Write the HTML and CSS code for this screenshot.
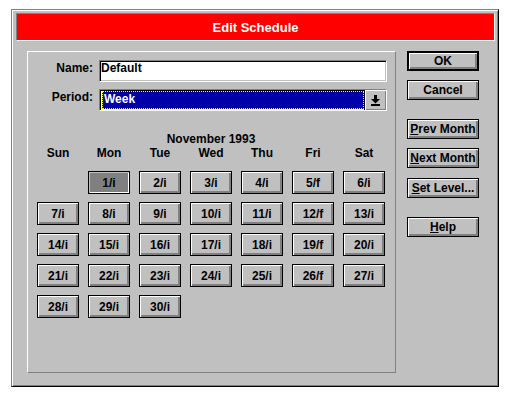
FILE: index.html
```html
<!DOCTYPE html>
<html lang="en">
	<head>
		<meta charset="UTF-8">
		<title>Edit Schedule</title>
		<link rel="stylesheet" href="styles.css">
	</head>
	<body>
		<div class="window">
			<div class="titlebar">Edit Schedule</div>
			<div class="dialog-body">
				<div class="panel">
					<div class="form">
						<label>Name:</label>
						<div class="edit">Default</div>
						<label>Period:</label>
						<div class="combo">
							<div class="combo-value">Week</div>
							<div class="combo-btn">
								<svg width="9" height="11" viewBox="0 0 9 11">
									<rect x="3" y="0" width="3" height="4"/>
									<path d="M0 4h9l-4.5 4.5z"/>
									<rect x="0" y="9" width="9" height="2"/>
								</svg>
							</div>
						</div>
					</div>
					<div class="cal">
						<div class="month">November 1993</div>
						<div class="cal-head">
							<div>Sun</div><div>Mon</div><div>Tue</div><div>Wed</div><div>Thu</div><div>Fri</div><div>Sat</div>
						</div>
						<div class="cal-days">
							<div></div>
							<button class="day pressed">1/i</button>
							<button class="day">2/i</button>
							<button class="day">3/i</button>
							<button class="day">4/i</button>
							<button class="day">5/f</button>
							<button class="day">6/i</button>
							<button class="day">7/i</button>
							<button class="day">8/i</button>
							<button class="day">9/i</button>
							<button class="day">10/i</button>
							<button class="day">11/i</button>
							<button class="day">12/f</button>
							<button class="day">13/i</button>
							<button class="day">14/i</button>
							<button class="day">15/i</button>
							<button class="day">16/i</button>
							<button class="day">17/i</button>
							<button class="day">18/i</button>
							<button class="day">19/f</button>
							<button class="day">20/i</button>
							<button class="day">21/i</button>
							<button class="day">22/i</button>
							<button class="day">23/i</button>
							<button class="day">24/i</button>
							<button class="day">25/i</button>
							<button class="day">26/f</button>
							<button class="day">27/i</button>
							<button class="day">28/i</button>
							<button class="day">29/i</button>
							<button class="day">30/i</button>
						</div>
					</div>
				</div>
				<div class="buttons">
					<button class="btn default">OK</button>
					<button class="btn cancel">Cancel</button>
					<button class="btn prev"><u>P</u>rev Month</button>
					<button class="btn next"><u>N</u>ext Month</button>
					<button class="btn level"><u>S</u>et Level...</button>
					<button class="btn help"><u>H</u>elp</button>
				</div>
			</div>
		</div>
	</body>
</html>
```

FILE: styles.css
```css
* {
	margin: 0;
	padding: 0;
	box-sizing: border-box;
}

body {
	background-color: #fff;
	padding: 9px 0 0 11px;
	font: bold 12px "Liberation Sans", Arial, sans-serif;
	color: #000;
}

.window {
	width: 488px;
	height: 378px;
	background-color: #c0c0c0;
	border: 1px solid;
	border-color: #808080 #000 #000 #808080;
	box-shadow: inset 1px 1px #fff, inset -1px -1px #808080;
	padding: 3px 3px 0 4px;
}

.titlebar {
	height: 28px;
	background-color: #f00;
	color: #fff;
	border: 1px solid;
	border-color: #808080 #fff #fff #808080;
	display: flex;
	align-items: center;
	justify-content: center;
	font-size: 13px;
}

.dialog-body {
	display: flex;
	margin: 10px 0 0 11px;
}

.panel {
	width: 369px;
	height: 322px;
	border: 1px solid;
	border-color: #fff #808080 #808080 #fff;
	padding-top: 8px;
}

.form {
	display: grid;
	grid-template-columns: 65px 288px;
	column-gap: 6px;
	row-gap: 7px;
}

.form label {
	text-align: right;
	line-height: 14px;
	padding-top: 1px;
}

.edit {
	height: 22px;
	background-color: #fff;
	border: 1px solid;
	border-color: #808080 #fff #fff #808080;
	box-shadow: inset 1px 1px #000, inset -1px -1px #c0c0c0;
	padding-left: 1px;
	line-height: 14px;
}

.combo {
	height: 22px;
	display: flex;
	background-color: #fff;
	border: 1px solid;
	border-color: #808080 #fff #fff #808080;
	box-shadow: inset 1px 1px #000;
	padding: 1px 0 1px 2px;
}

.combo-value {
	flex: 1;
	background-color: #0000a8;
	color: #fff;
	border: 1px dotted #ff0;
	line-height: 14px;
	padding-left: 1px;
}

.combo-btn {
	width: 22px;
	margin-top: -1px;
	margin-bottom: -1px;
	background-color: #c0c0c0;
	border-left: 1px solid #000;
	box-shadow: inset 1px 1px #fff, inset -1px -1px #808080;
	display: flex;
	align-items: center;
	justify-content: center;
}

.cal {
	padding-left: 9px;
}

.month {
	width: 348px;
	margin-top: 21px;
	text-align: center;
	line-height: 14px;
}

.cal-head,
.cal-days {
	display: grid;
	grid-template-columns: repeat(7, 42px);
	column-gap: 9px;
}

.cal-head div {
	text-align: center;
	line-height: 14px;
}

.cal-days {
	margin-top: 11px;
	grid-auto-rows: 23px;
	row-gap: 8px;
}

button {
	font: inherit;
	color: inherit;
	background-color: #c0c0c0;
	border: 1px solid #000;
	box-shadow: inset 1px 1px #fff, inset -2px -2px #808080;
	line-height: 14px;
}

.day.pressed {
	background-color: #808080;
	box-shadow: inset 1px 1px #c0c0c0, inset -1px -1px #fff;
}

.buttons {
	width: 72px;
	margin-left: 11px;
	display: flex;
	flex-direction: column;
}

.btn {
	height: 20px;
}

.btn.default {
	border-width: 2px;
}

.btn.cancel,
.btn.next {
	margin-top: 9px;
}

.btn.prev,
.btn.help {
	margin-top: 19px;
}

.btn.level {
	margin-top: 10px;
}
```
